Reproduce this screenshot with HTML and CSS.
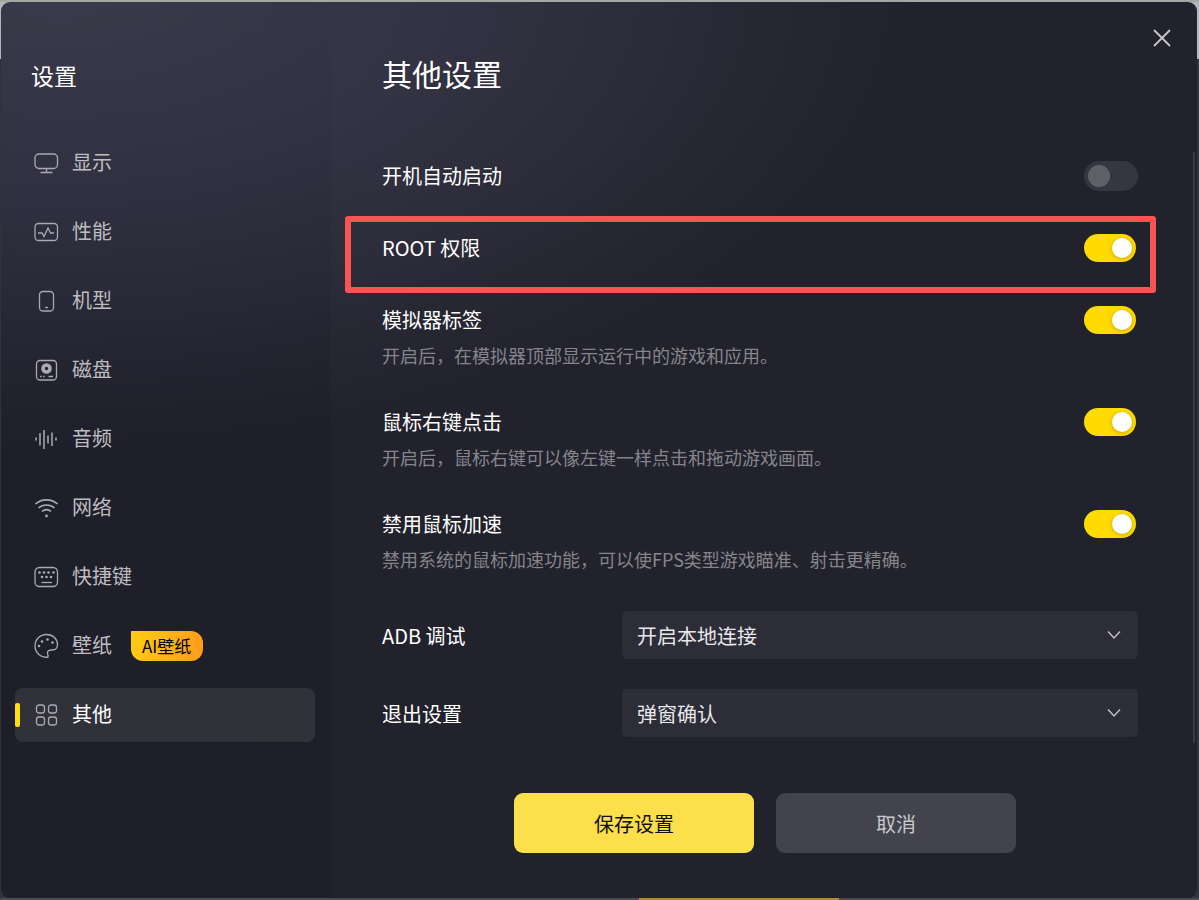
FILE: index.html
```html
<!DOCTYPE html>
<html lang="zh-CN">
<head>
  <meta charset="utf-8">
  <meta name="viewport" content="width=device-width, initial-scale=1.0">
  <title>设置</title>
  <link rel="stylesheet" href="styles.css">
</head>
<body>
  <div class="dialog">
    <aside class="sidebar">
      <h2 class="sidebar-title">设置</h2>
      <nav class="menu">
        <a class="menu-item" href="#display">
          <svg class="icon" viewBox="0 0 24 24"><rect x="1" y="3" width="22.500" height="14.500" rx="4"/><path d="M12.500 17.500v4M6.500 21.500h12"/></svg>
          <span class="name">显示</span>
        </a>
        <a class="menu-item" href="#performance">
          <svg class="icon" viewBox="0 0 24 24"><rect x="1" y="3.500" width="22.500" height="17" rx="3.500"/><path d="M4 13h4l2 3.500 4-8.500 2.500 5H20"/></svg>
          <span class="name">性能</span>
        </a>
        <a class="menu-item" href="#device">
          <svg class="icon" viewBox="0 0 24 24"><rect x="5.500" y="2.500" width="14" height="19.500" rx="3.500"/><path d="M11 18.500h3"/></svg>
          <span class="name">机型</span>
        </a>
        <a class="menu-item" href="#disk">
          <svg class="icon" viewBox="0 0 24 24"><rect x="2.500" y="2.500" width="20" height="19.500" rx="3.500"/><circle cx="12.500" cy="10.500" r="3.500" stroke-width="3.600"/><path d="M6 18.500h1.500M9 18.500h1.500M14.500 18.500h4.500"/></svg>
          <span class="name">磁盘</span>
        </a>
        <a class="menu-item" href="#audio">
          <svg class="icon" viewBox="0 0 24 24"><path d="M2 10.500v3M6 6v12.500M10 3v19M14 8.500v8M18 5.500v13.500M22 10.500v3" stroke-width="1.500"/></svg>
          <span class="name">音频</span>
        </a>
        <a class="menu-item" href="#network">
          <svg class="icon" viewBox="0 0 24 24"><path d="M1.500 8c6-5.500 16-5.500 22 0M4.500 12c4.500-4 11.500-4 16 0M8 15.500c2.500-2.500 6.500-2.500 9 0" stroke-width="1.600"/><circle class="dot" cx="12.500" cy="20" r="1.400"/></svg>
          <span class="name">网络</span>
        </a>
        <a class="menu-item" href="#hotkeys">
          <svg class="icon" viewBox="0 0 24 24"><rect x="1" y="2.500" width="22.500" height="19" rx="4.500"/><path d="M7.500 17.500h10.500"/><g class="dot"><circle cx="5.500" cy="7.500" r="1.300"/><circle cx="10" cy="7.500" r="1.300"/><circle cx="14.500" cy="7.500" r="1.300"/><circle cx="19.500" cy="7.500" r="1.300"/><circle cx="8" cy="12" r="1.300"/><circle cx="12.500" cy="12" r="1.300"/><circle cx="17" cy="12" r="1.300"/></g></svg>
          <span class="name">快捷键</span>
        </a>
        <a class="menu-item" href="#wallpaper">
          <svg class="icon" viewBox="0 0 24 24"><path d="M14 23C7 24.500 1 18.500 1 12 1 5.500 6 .5 12.500.5S23.500 5 23.500 10.500c0 4-2.500 5.500-5.500 5.500-2.500 0-5 .5-4.500 3.500.200 1.500 1 2 .5 3.500z"/><g class="dot"><circle cx="5" cy="12" r="1.300"/><circle cx="8" cy="7.500" r="1.300"/><circle cx="13.500" cy="5.500" r="1.300"/><circle cx="18.500" cy="8.500" r="1.300"/></g></svg>
          <span class="name">壁纸</span>
          <span class="badge">AI壁纸</span>
        </a>
        <a class="menu-item active" href="#other">
          <svg class="icon" viewBox="0 0 24 24"><rect x="2.500" y="2" width="8" height="8" rx="2.500"/><rect x="14.500" y="2" width="8" height="8" rx="2.500"/><rect x="2.500" y="14" width="8" height="8" rx="2.500"/><rect x="14.500" y="14" width="8" height="8" rx="2.500"/></svg>
          <span class="name">其他</span>
        </a>
      </nav>
    </aside>

    <main class="content">
      <button class="close" type="button" aria-label="关闭">
        <svg viewBox="0 0 18 18"><path d="M1 1l16 16M17 1L1 17"/></svg>
      </button>
      <h1 class="title">其他设置</h1>

      <form class="form">
        <div class="settings">
          <div class="setting">
            <label for="autostart">开机自动启动</label>
            <input class="switch" type="checkbox" id="autostart">
          </div>
          <div class="setting highlight">
            <label for="root">ROOT 权限</label>
            <input class="switch" type="checkbox" id="root" checked>
          </div>
          <div class="setting">
            <label for="tabs">模拟器标签</label>
            <input class="switch" type="checkbox" id="tabs" checked>
            <p class="hint">开启后，在模拟器顶部显示运行中的游戏和应用。</p>
          </div>
          <div class="setting">
            <label for="rightclick">鼠标右键点击</label>
            <input class="switch" type="checkbox" id="rightclick" checked>
            <p class="hint">开启后，鼠标右键可以像左键一样点击和拖动游戏画面。</p>
          </div>
          <div class="setting">
            <label for="accel">禁用鼠标加速</label>
            <input class="switch" type="checkbox" id="accel" checked>
            <p class="hint">禁用系统的鼠标加速功能，可以使FPS类型游戏瞄准、射击更精确。</p>
          </div>
        </div>

        <div class="choices">
          <div class="choice">
            <label for="adb">ADB 调试</label>
            <div class="select">
              <select id="adb"><option>开启本地连接</option></select>
              <svg class="arrow" viewBox="0 0 14 10"><path d="M1 1.500l6 6.500 6-6.500"/></svg>
            </div>
          </div>
          <div class="choice">
            <label for="exit">退出设置</label>
            <div class="select">
              <select id="exit"><option>弹窗确认</option></select>
              <svg class="arrow" viewBox="0 0 14 10"><path d="M1 1.500l6 6.500 6-6.500"/></svg>
            </div>
          </div>
        </div>

        <div class="actions">
          <button class="btn primary" type="button">保存设置</button>
          <button class="btn" type="button">取消</button>
        </div>
      </form>
      <div class="scrollbar"></div>
    </main>
  </div>
</body>
</html>
```
FILE: styles.css
```css
* {
  box-sizing: border-box;
}

body {
  margin: 0;
  min-height: 100vh;
  padding: 2px 2px 2px 1px;
  display: flex;
  font-family: "Noto Sans CJK SC", sans-serif;
  font-size: 20px;
  color: #fff;
  /* app window showing around the dialog */
  background:
    linear-gradient(#b08a30, #b08a30) 639px 100% / 200px 2px no-repeat,
    linear-gradient(#4a4a55, #4a4a55) 0 100% / 100% 2px no-repeat,
    linear-gradient(#a3a8a4, #a3a8a4) 0 0 / 100% 2px no-repeat,
    linear-gradient(#b4b6bb 59px, #32323d 59px);
}

h1,
h2,
p {
  margin: 0;
  font-weight: normal;
}

button,
select {
  font: inherit;
  color: inherit;
  border: 0;
}

.dialog {
  flex: 1;
  display: flex;
  border-radius: 9px;
  overflow: hidden;
  background:
    radial-gradient(ellipse 860px 460px at 60px -10px, #3b3b4b 0%, #343445 40%, rgba(52, 52, 69, 0) 100%),
    #22222d;
}

/* sidebar */
.sidebar {
  width: 330px;
  padding: 55px 16px 16px 14px;
  background: linear-gradient(rgba(10, 10, 25, 0.02), rgba(10, 10, 25, 0.12) 400px);
}

.sidebar-title {
  margin-left: 16px;
  font-size: 23px;
  line-height: 36px;
}

.menu {
  margin-top: 43px;
  display: flex;
  flex-direction: column;
  gap: 15px;
}

.menu-item {
  position: relative;
  height: 54px;
  padding-left: 19px;
  display: flex;
  align-items: center;
  border-radius: 8px;
  line-height: 28px;
  color: #bdbdc0;
  text-decoration: none;
}

.menu-item .name {
  padding-bottom: 3px;
}

.menu-item.active {
  color: #fff;
  background: #31313a;
}

.menu-item.active::before {
  content: "";
  position: absolute;
  left: 0;
  top: 15px;
  width: 5px;
  height: 24px;
  border-radius: 2px;
  background: #ffdd12;
}

.icon {
  width: 24px;
  height: 24px;
  margin-right: 14px;
  overflow: visible;
  fill: none;
  stroke: #aaaab0;
  stroke-width: 1.3;
}

.icon .dot {
  fill: #aaaab0;
  stroke: none;
}

.badge {
  margin-left: 19px;
  padding: 0 12px 0 11px;
  border-radius: 0 12px 12px 12px;
  font-size: 17px;
  line-height: 30px;
  color: #000;
  background: linear-gradient(100deg, #ffcd12, #ff9b1c);
}

/* right part */
.content {
  position: relative;
  flex: 1;
}

.close {
  position: absolute;
  top: 23px;
  right: 22px;
  width: 26px;
  height: 26px;
  padding: 4px;
  display: flex;
  background: none;
}

.close svg {
  flex: 1;
  stroke: #c6c6c9;
  stroke-width: 1.8;
}

.title {
  padding: 49px 51px 0;
  font-size: 30px;
  line-height: 44px;
}

.settings {
  margin-top: 64px;
  padding: 0 59px 0 51px;
  display: flex;
  flex-direction: column;
  gap: 38px;
}

.setting {
  display: grid;
  grid-template-columns: 1fr 54px;
  align-items: center;
  line-height: 34px;
}

.hint {
  grid-column: 1 / -1;
  margin-top: 6px;
  font-size: 18px;
  line-height: 24px;
  color: #85858a;
}

.highlight {
  position: relative;
}

.highlight::after {
  content: "";
  position: absolute;
  inset: -15px -18px -28px -37px;
  border: 6px solid #f95353;
  border-radius: 3px;
  pointer-events: none;
}

.switch {
  appearance: none;
  width: 54px;
  height: 30px;
  margin: 0;
  padding: 4px;
  display: flex;
  border-radius: 15px;
  background: #363640;
}

.switch::before {
  content: "";
  width: 22px;
  height: 22px;
  border-radius: 50%;
  background: #606068;
}

.switch:checked {
  width: 52px;
  height: 28px;
  justify-content: flex-end;
  background: #ffdb00;
}

.switch:checked::before {
  width: 20px;
  height: 20px;
  background: #fff;
  box-shadow: 0 1px 4px rgba(120, 90, 0, 0.4);
}

.choices {
  margin-top: 40px;
  padding: 0 59px 0 51px;
  display: flex;
  flex-direction: column;
  gap: 30px;
}

.choice {
  display: flex;
  align-items: center;
}

.choice label {
  width: 240px;
}

.select {
  position: relative;
  flex: 1;
}

.select select {
  appearance: none;
  display: block;
  width: 100%;
  height: 48px;
  padding: 0 15px;
  border-radius: 5px;
  color: #e8e8ea;
  background: #2d2d38;
}

.arrow {
  position: absolute;
  top: 19px;
  right: 17px;
  width: 14px;
  height: 10px;
  fill: none;
  stroke: #c0c0c4;
  stroke-width: 1.5;
  pointer-events: none;
}

.actions {
  margin: 56px 0 45px;
  padding-left: 2px;
  display: flex;
  justify-content: center;
  gap: 22px;
}

.btn {
  width: 240px;
  height: 60px;
  border-radius: 9px;
  color: #c8c8cb;
  background: #43434d;
}

.btn.primary {
  color: #111;
  background: #fcdf4b;
}

.scrollbar {
  position: absolute;
  top: 150px;
  right: 2px;
  bottom: 155px;
  width: 2px;
  border-radius: 1px;
  background: #3a3a44;
}
```
